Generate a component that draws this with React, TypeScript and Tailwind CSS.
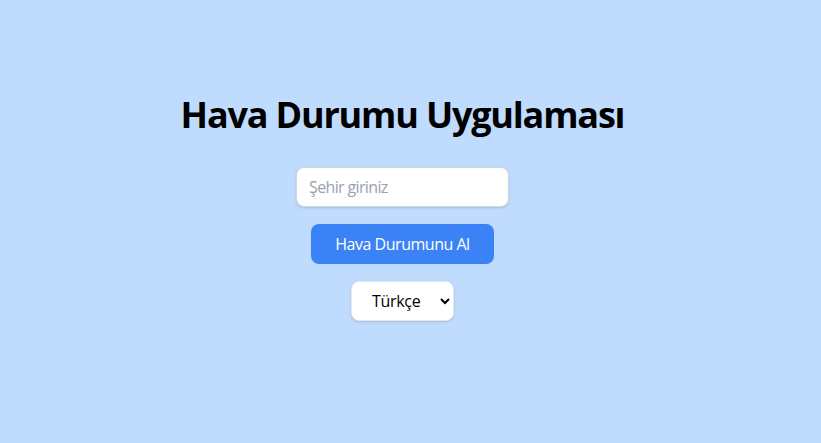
import { useState } from "react";

export default function App() {
  const [city, setCity] = useState("");
  const [lang, setLang] = useState("tr");

  return (
    <div className="min-h-screen w-full bg-[#bfdbfe] font-['Open_Sans',sans-serif]">
      <div className="flex flex-col items-center pt-[95px] pr-4">
        <h1 className="mb-8 text-4xl font-bold leading-10 tracking-[-0.033em] text-black">
          Hava Durumu Uygulaması
        </h1>

        <input
          type="text"
          value={city}
          onChange={(e) => setCity(e.target.value)}
          placeholder="Şehir giriniz"
          className="h-10 w-[213px] rounded-lg border border-gray-300 bg-white px-3 text-base tracking-[-0.04em] text-black placeholder:text-gray-400 shadow-sm outline-none"
        />

        <button className="mt-[17px] h-10 rounded-lg bg-[#3b82f6] px-6 text-base tracking-[-0.03em] text-white">
          Hava Durumunu Al
        </button>

        <select
          value={lang}
          onChange={(e) => setLang(e.target.value)}
          className="mt-[17px] h-10 w-[103px] rounded-lg border border-gray-200 bg-white px-4 text-base tracking-[-0.02em] text-black shadow-sm"
        >
          <option value="tr">Türkçe</option>
          <option value="en">English</option>
        </select>
      </div>
    </div>
  );
}
